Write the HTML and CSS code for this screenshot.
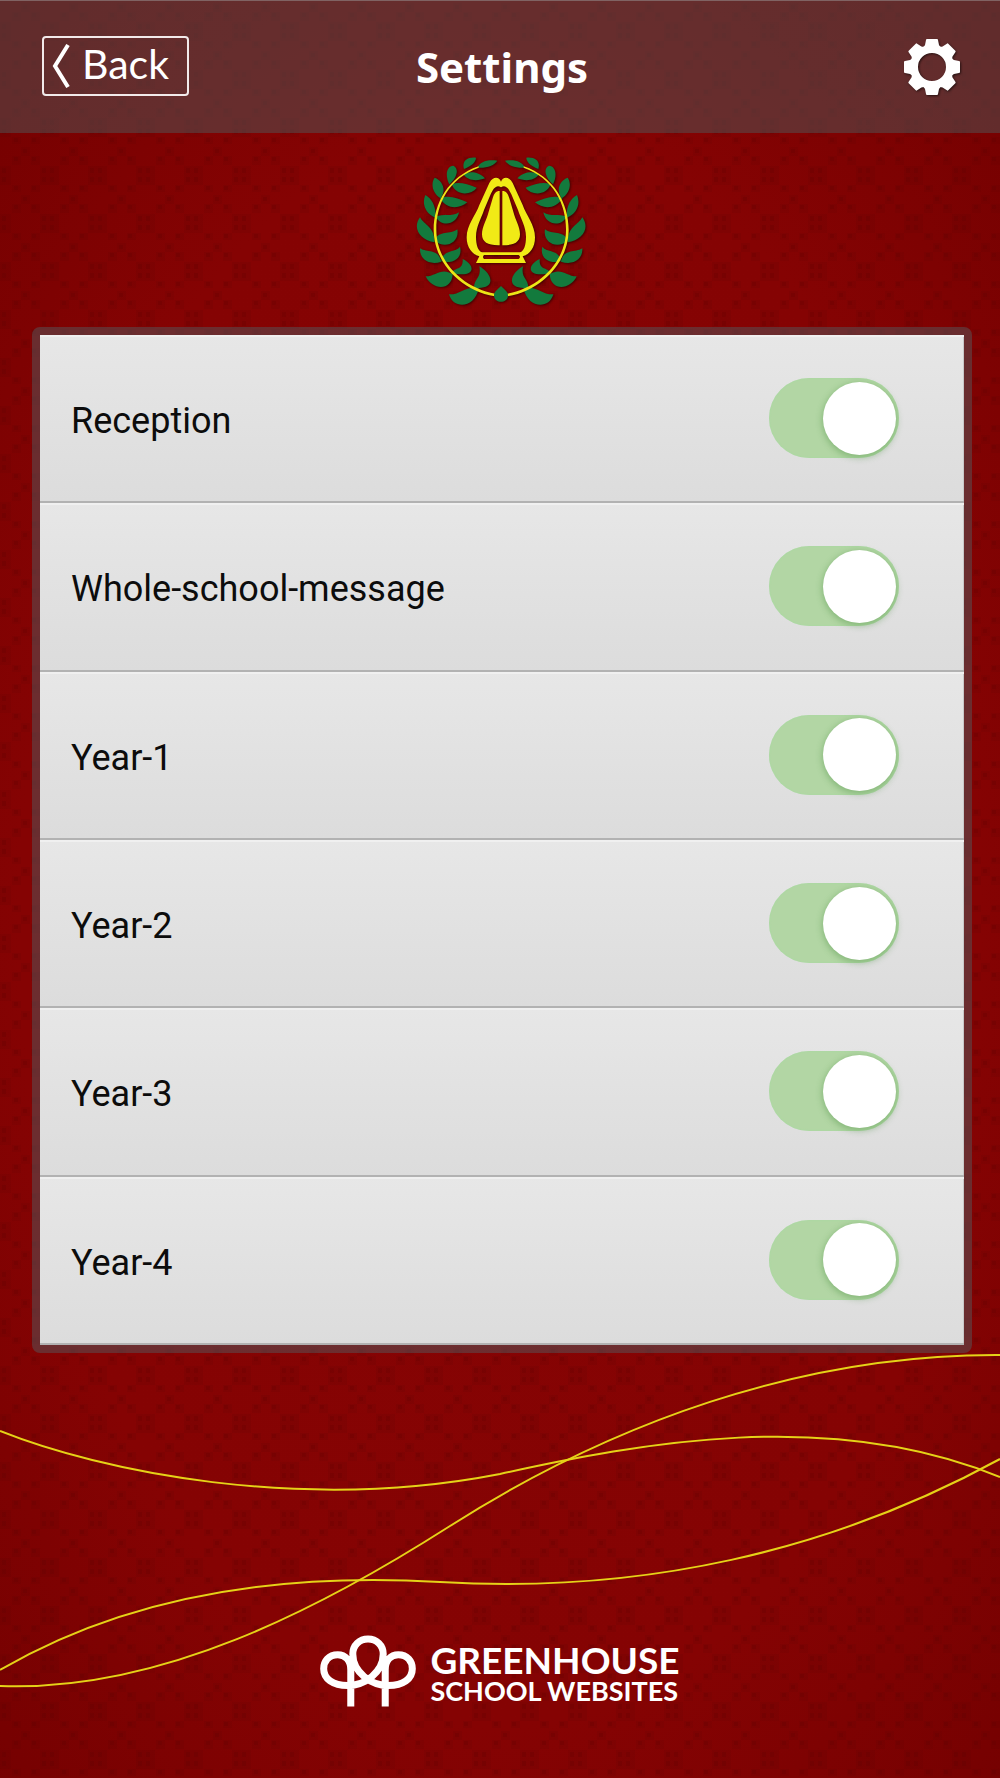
FILE: index.html
```html
<!DOCTYPE html>
<html lang="en">
<head>
<meta charset="utf-8">
<meta name="viewport" content="width=device-width, initial-scale=1">
<title>Settings</title>
<link rel="stylesheet" href="styles.css">
</head>
<body>
<header class="topbar">
  <button class="back" type="button">
    <svg class="back-arrow" viewBox="0 0 18 44" aria-hidden="true"><path d="M16 1 3 22 16 43"/></svg>
    <span class="back-label">Back</span>
  </button>
  <h1 class="title">Settings</h1>
  <button class="gear" type="button" aria-label="Settings menu">
    <svg viewBox="-30 -30 60 60" aria-hidden="true">
      <defs><path id="tooth" d="M-9 -19 -7 -22 -6 -27 Q-6 -28 -5 -28 H5 Q6 -28 6 -27 L7 -22 9 -19Z"/></defs>
      <circle r="18" fill="none" stroke="#fff" stroke-width="8"/>
      <g fill="#fff">
        <use href="#tooth"/><use href="#tooth" transform="rotate(45)"/><use href="#tooth" transform="rotate(90)"/><use href="#tooth" transform="rotate(135)"/>
        <use href="#tooth" transform="rotate(180)"/><use href="#tooth" transform="rotate(225)"/><use href="#tooth" transform="rotate(270)"/><use href="#tooth" transform="rotate(315)"/>
      </g>
    </svg>
  </button>
</header>

<main class="content">
  <svg class="crest" viewBox="0 0 600 510" role="img" aria-label="School crest">
    <defs>
      <g id="branch">
        <path fill="#137a3d" d="M232 68C240 50 262 42 292 47 282 62 260 70 232 68ZM192 72C185 50 200 35 228 38 228 52 212 64 192 72ZM190 88C205 78 235 78 255 100 235 108 205 110 190 88ZM148 118C134 90 140 63 160 62 178 70 172 98 148 118ZM155 118C175 110 200 116 230 128 215 150 170 155 155 118ZM122 160C96 145 92 115 104 98 128 106 140 135 122 160ZM120 160C145 148 175 160 202 172 180 192 140 195 120 160ZM106 218C75 205 65 175 76 150 98 162 110 190 106 218ZM107 215C130 205 155 217 177 202 170 240 125 248 107 215ZM104 292C60 285 36 250 60 217 72 240 104 245 104 292ZM104 285C118 255 150 270 172 253 180 295 130 315 104 285ZM124 350C90 362 58 345 60 310 85 325 115 310 124 350ZM124 348C132 310 165 325 180 305 190 345 150 358 124 348ZM158 388C155 440 95 435 77 394 105 395 125 365 158 388ZM155 384C165 365 190 378 188 342 230 362 225 400 155 384ZM236 430C225 490 160 495 147 448 180 450 200 420 236 430ZM222 428C222 400 245 400 238 364 280 388 290 435 222 428Z"/>
        <path fill="#ede617" d="M236 64C145 95 101 175 101 255 102 350 180 437 284 454L286 446C190 430 109 350 109 255 108 180 145 100 236 68Z"/>
      </g>
    </defs>
    <use href="#branch"/>
    <use href="#branch" transform="translate(607 0) scale(-1 1)"/>
    <path fill="#137a3d" d="M303 423C316 436 324 440 324 452 322 476 284 476 282 452 282 440 290 436 303 423Z"/>
    <path fill="#f1ea16" fill-rule="evenodd" d="M303 110C298 96 280 92 268 114L238 180C228 210 200 240 200 277 200 308 216 328 238 334L228 354H378L368 334C390 328 405 308 405 277 405 240 378 210 368 180L338 114C326 92 308 96 303 110ZM303 127C290 117 280 130 272 148L252 195C244 220 228 245 228 275 228 300 234 318 246 322H360C372 318 378 300 378 275 378 245 362 220 354 195L334 148C326 130 316 117 303 127ZM252 330Q246 336 252 342H356Q364 336 356 330Z"/>
    <path fill="#f1ea16" d="M299 138C287 138 282 146 278 160L266 200C260 225 246 245 246 268 246 292 265 302 299 301ZM307 138C319 138 324 146 328 160L340 200C346 225 360 245 360 268 360 292 341 302 307 301Z"/>
  </svg>

  <ul class="panel">
    <li><label class="row"><span>Reception</span><input class="switch" type="checkbox" checked></label></li>
    <li><label class="row"><span>Whole-school-message</span><input class="switch" type="checkbox" checked></label></li>
    <li><label class="row"><span>Year-1</span><input class="switch" type="checkbox" checked></label></li>
    <li><label class="row"><span>Year-2</span><input class="switch" type="checkbox" checked></label></li>
    <li><label class="row"><span>Year-3</span><input class="switch" type="checkbox" checked></label></li>
    <li><label class="row"><span>Year-4</span><input class="switch" type="checkbox" checked></label></li>
  </ul>
</main>

<footer class="footer">
  <svg class="waves" viewBox="0 1353 1000 425" preserveAspectRatio="none" aria-hidden="true">
    <path d="M0 1431C100 1471 300 1513 500 1474 640 1443 830 1407 1000 1477"/>
    <path d="M0 1686C160 1692 320 1609 450 1526 610 1424 800 1354 1000 1355"/>
    <path d="M0 1670C120 1600 270 1572 440 1582 640 1594 830 1552 1000 1459"/>
  </svg>
  <div class="brand">
    <svg class="brand-mark" viewBox="62 74 287 215" aria-hidden="true">
      <path d="M154 288V178C154 150 138 133 115 133 88 133 73 152 73 175 73 205 100 225 145 225 196 225 251 185 251 131 251 105 231 86 205.500 86 180 86 160 105 160 131 160 185 215 225 266 225 311 225 338 205 338 175 338 152 323 133 296 133 273 133 257 150 257 178V288"/>
    </svg>
    <div class="brand-text">
      <span class="brand-name">GREENHOUSE</span>
      <span class="brand-sub">SCHOOL WEBSITES</span>
    </div>
  </div>
</footer>
</body>
</html>
```
FILE: styles.css
```css
* {
  box-sizing: border-box;
}

body {
  margin: 0;
  min-height: 100vh;
  display: flex;
  flex-direction: column;
  font-family: Roboto, "Liberation Sans", sans-serif;
  background:
    url("data:image/svg+xml,%3Csvg xmlns='http://www.w3.org/2000/svg' width='48' height='48'%3E%3Cg fill='%23500000' fill-opacity='.1'%3E%3Cpath d='M12 12h9v9h-9zM31 12h9v9h-9zM12 41h9v7h-9zM31 41h9v7h-9zM21 3h9v9h-9zM0 22h11v19h-11zM40 22h8v19h-8z'/%3E%3C/g%3E%3Cg fill='%23500000' fill-opacity='.16'%3E%3Cpath d='M14 13h4v4h-4zM32 13h4v4h-4zM23 5h4v4h-4zM2 24h4v5h-4zM2 33h4v5h-4zM42 24h4v5h-4zM42 33h4v5h-4zM14 42h4v4h-4zM32 42h4v4h-4z'/%3E%3C/g%3E%3C/svg%3E"),
    radial-gradient(ellipse 80% 75% at 50% 52%, #860404 0%, #850303 60%, #700000 100%);
}

.topbar {
  display: grid;
  grid-template-columns: 1fr auto 1fr;
  align-items: center;
  height: 133px;
  padding: 0 38px 0 42px;
  color: #fff;
  background: rgba(77, 88, 88, .5);
  border-top: 1px solid #806363;
}

button {
  padding: 0;
  border: 0;
  background: none;
  color: inherit;
  cursor: pointer;
}

.back {
  justify-self: start;
  display: flex;
  align-items: center;
  gap: 12px;
  width: 147px;
  height: 60px;
  margin-bottom: 2px;
  padding: 0 8px;
  border: 2px solid #f2eaea;
  border-radius: 4px;
  font: 41px/52px Lato, "Noto Sans", sans-serif;
}

.back-label {
  padding-bottom: 4px;
}

.back-arrow {
  width: 18px;
  height: 44px;
  fill: none;
  stroke: #fff;
  stroke-width: 4;
}

.title {
  margin: 0;
  font: bold 42px/56px "Noto Sans", sans-serif;
}

.gear {
  justify-self: end;
  width: 60px;
  height: 60px;
}

.gear svg {
  display: block;
  filter: drop-shadow(1px 1px 1px rgba(0, 0, 0, .6));
}

.content {
  display: flex;
  flex-direction: column;
  gap: 12px;
  padding-top: 12px;
}

.crest {
  align-self: center;
  width: 200px;
  height: 170px;
  filter: drop-shadow(1px 1px 1px rgba(0, 0, 0, .5));
}

.panel {
  display: grid;
  grid-auto-rows: 1fr;
  min-height: 1026px;
  margin: 0 28px 0 32px;
  padding: 0;
  list-style: none;
  border: 8px solid rgba(83, 88, 92, .5);
  border-radius: 8px;
}

.panel li {
  display: grid;
}

.row {
  display: flex;
  align-items: center;
  justify-content: space-between;
  padding: 0 65px 0 31px;
  font-size: 36px;
  line-height: 48px;
  color: #0c0c0c;
  background: linear-gradient(#e7e7e7, #dcdcdc);
  border-bottom: 2px solid #b2b2b2;
  box-shadow: inset 0 2px #f0f0f0, inset -1px 0 #c8c8c8;
}

.row span {
  padding-top: 6px;
}

.switch {
  appearance: none;
  display: flex;
  align-items: center;
  width: 130px;
  height: 80px;
  margin: 0;
  padding: 0 3px;
  border-radius: 40px;
  background: #c4c4c4;
}

.switch::before {
  content: "";
  width: 73px;
  height: 73px;
  border-radius: 50%;
  background: #fff;
  box-shadow: 0 2px 6px 1px rgba(70, 140, 60, .4);
}

.switch:checked {
  justify-content: flex-end;
  background: #b2d6a4;
  box-shadow: inset 0 0 2px #a4dca0;
}

.footer {
  position: relative;
  flex: 1;
  display: flex;
  justify-content: center;
  align-items: flex-end;
  min-height: 425px;
  padding-bottom: 71px;
}

.waves {
  position: absolute;
  inset: 0;
  width: 100%;
  height: 100%;
  fill: none;
  stroke: #e5d218;
  stroke-width: 2;
}

.brand {
  position: relative;
  display: flex;
  align-items: center;
  gap: 14px;
  color: #fff;
  font-family: Lato, sans-serif;
  font-weight: bold;
}

.brand-mark {
  width: 96px;
  height: 72px;
  fill: none;
  stroke: #fff;
  stroke-width: 21;
}

.brand-text {
  display: grid;
  padding-top: 8px;
}

.brand-name {
  font-size: 37px;
  line-height: 32px;
}

.brand-sub {
  font-size: 27px;
  line-height: 30px;
}
```
